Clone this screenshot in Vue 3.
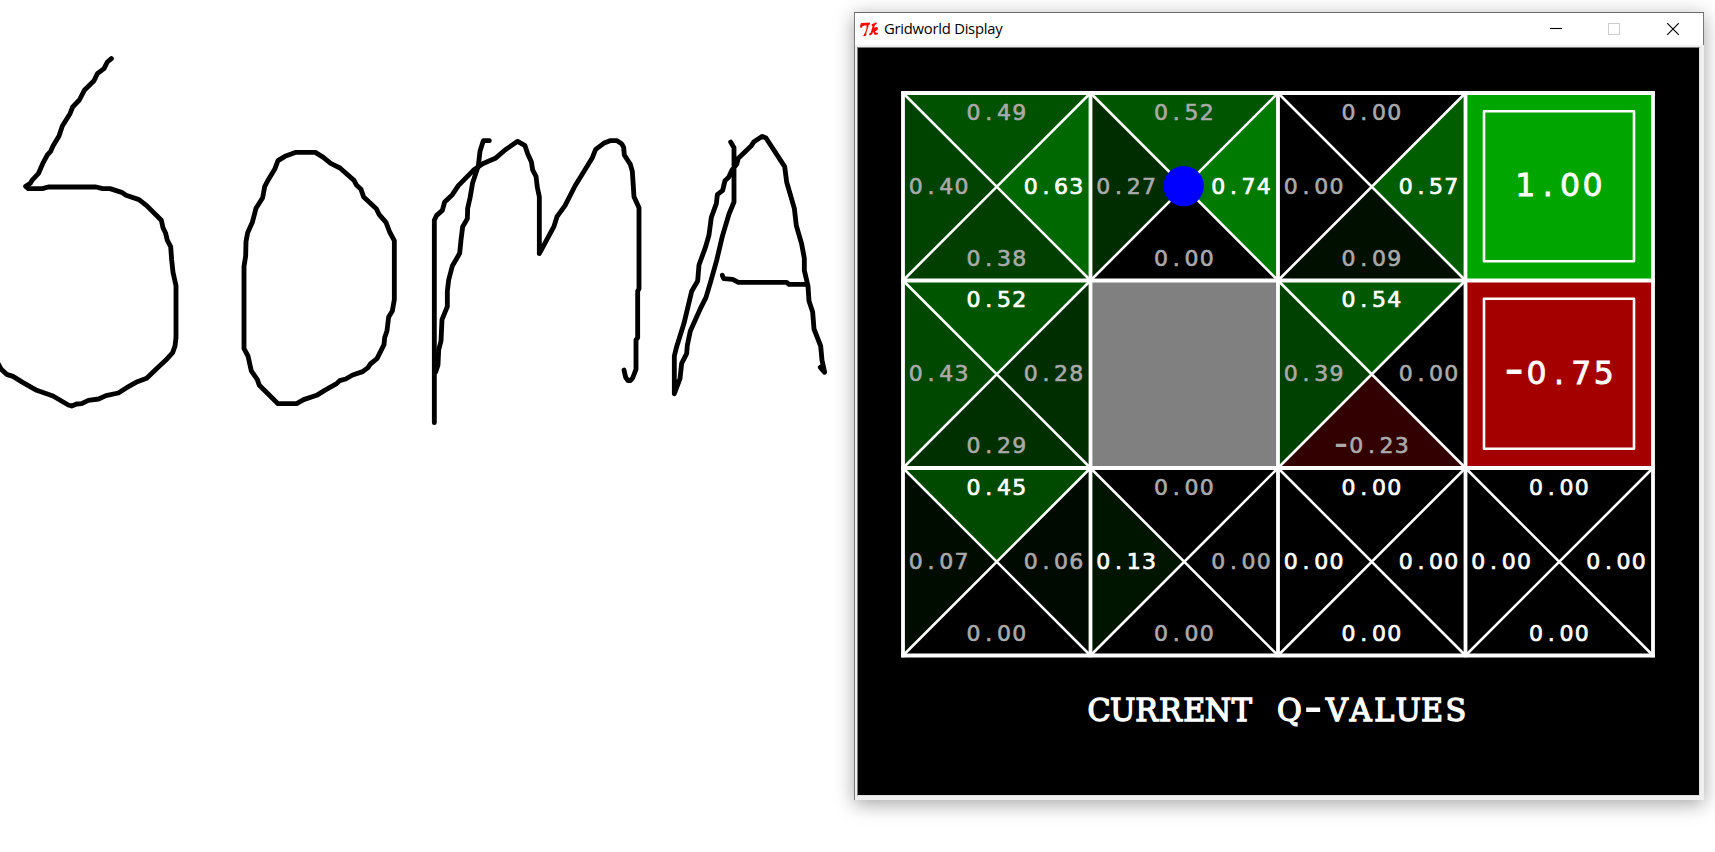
<script setup>
const PITCH = 187.5
const ORIGIN = 45

const rows = [
  [
    { q: ['0.49', '0.63', '0.38', '0.40'], best: [1] },
    { q: ['0.52', '0.74', '0.00', '0.27'], best: [1] },
    { q: ['0.00', '0.57', '0.09', '0.00'], best: [1] },
    { exit: '1.00' }
  ],
  [
    { q: ['0.52', '0.28', '0.29', '0.43'], best: [0] },
    { wall: true },
    { q: ['0.54', '0.00', '-0.23', '0.39'], best: [0] },
    { exit: '-0.75' }
  ],
  [
    { q: ['0.45', '0.06', '0.00', '0.07'], best: [0] },
    { q: ['0.00', '0.00', '0.00', '0.13'], best: [3] },
    { q: ['0.00', '0.00', '0.00', '0.00'], best: [0, 1, 2, 3] },
    { q: ['0.00', '0.00', '0.00', '0.00'], best: [0, 1, 2, 3] }
  ]
]

const cells = rows.flatMap((row, r) =>
  row.map((cell, c) => ({ ...cell, key: `${r}-${c}`, x: ORIGIN + c * PITCH, y: ORIGIN + r * PITCH }))
)

const mid = PITCH / 2
const triangles = [
  `0,0 ${PITCH},0 ${mid},${mid}`,
  `${PITCH},0 ${PITCH},${PITCH} ${mid},${mid}`,
  `0,${PITCH} ${PITCH},${PITCH} ${mid},${mid}`,
  `0,0 0,${PITCH} ${mid},${mid}`
]
const anchors = [
  [93.4, 26.9],
  [150.5, 100.6],
  [93.4, 172.6],
  [35.6, 100.6]
]

function shade(value) {
  const v = parseFloat(value)
  return v < 0 ? `rgb(${Math.round((-v / 0.75) * 165)},0,0)` : `rgb(0,${Math.round(v * 165)},0)`
}

// Fixed-pitch glyph centres around a middle point
function glyphs(text, center, advance) {
  return [...text].map((ch, i) => ({
    ch,
    x: (center + (i - (text.length - 1) / 2) * advance).toFixed(2),
    minus: ch === '-'
  }))
}

const caption = 'CURRENT Q-VALUES'
const captionGlyphs = glyphs(caption, 419.4, 23.78)
const gridLinesX = [0, 1, 2, 3, 4].map((i) => ORIGIN + i * PITCH)
const gridLinesY = [0, 1, 2, 3].map((i) => ORIGIN + i * PITCH)
</script>

<template>
  <main class="desk">
    <svg class="ink" viewBox="0 0 845 852" aria-label="SOMA">
      <g transform="translate(0 40) scale(.33333)">
        <path d="M334 56L322 66L312 86L292 101L282 122L253 151L238 180L218 201L210 221L187 258L177 288L159 318L152 334L142 345L130 367L115 401L96 421L91 430L77 439L85 446H127L145 441H288L308 446H330L365 457L378 466L417 479L440 497L484 541L489 563L497 580L502 601L512 620L515 660L519 697L528 737V893L525 918L518 938L497 961L472 984L440 1015L412 1025L380 1043L355 1059L318 1067L296 1077L265 1081L245 1091L230 1092L215 1098L205 1095L159 1068L110 1051L68 1027L39 1009L20 1003L4 988L-6 970" />
        <path d="M888 337L855 349L834 362L824 388L805 419L794 440L788 473L768 505L757 547L743 578L738 605L737 648L732 680V926L744 948L754 993L772 1019L778 1036L834 1091H890L911 1079L950 1066L974 1051L1010 1031L1019 1022L1037 1017L1058 1005L1088 995L1104 983L1111 972L1131 956L1152 914L1154 893L1161 872L1166 831L1177 813L1183 779V602L1169 576L1158 547L1137 523L1129 506L1091 471L1083 448L1070 436L1062 421L1020 384L992 370L970 352L946 337Z" />
      </g>
      <g transform="translate(410 110) scale(.33333)">
        <path d="M238 92H220L210 124L205 167L188 218L180 264L173 295L172 326L158 350L153 390L149 430L127 468L116 510L112 544V590L96 629L93 693L86 720L84 765L77 786" />
        <path d="M73 938V331L80 316L97 301L104 276L127 254L145 227L190 181L218 161L256 145L285 120L323 94L345 107L353 131L364 155L368 180L378 199L382 232L388 260V431L432 349L441 320L465 287L495 228L547 143L557 118L581 100L600 92H621L635 101L641 112L643 135L661 163L667 184L672 260L687 293V537L683 543V683L678 690V778L668 804L661 812H654L647 802L642 780" />
        <path d="M962 96L972 113V276L957 312L937 379L920 451L902 515L888 562L873 592L841 663L832 706L830 731L815 760L810 806L793 851V738L800 710L822 640L845 544L863 513L867 465L887 410L897 375L904 322L919 281L922 254L938 241L945 212L956 202L966 180L980 163L985 145L1024 107L1032 95L1057 79L1068 84L1124 170L1130 216L1153 295L1159 347L1175 402L1183 445V481L1194 528L1197 573L1208 606L1212 657L1232 708L1236 751L1244 787L1231 772" />
        <path d="M937 496L941 506L968 508L985 517H1130L1137 523H1190" />
      </g>
    </svg>

    <section class="window">
      <header class="titlebar">
        <svg class="tk" viewBox="0 0 19 15">
          <path d="M.6 5.2L1.2 1.5L9.6 1.1L9.2 2.6L4.5 3.1L2.2 3.8L1.4 5.5ZM6.6 2.2Q8.8 2.4 7.8 5.2L5.5 10.8L3.8 14L6.3 12.8" />
          <path d="M16.6 1.8Q15 .8 13.8 3.5L11.4 11.7M11.8 3.3L14.4 2.1M12.2 8.6Q15.8 5 17 6.2Q17.2 8 13.7 8.6L15.3 12L17.8 11.4M9.4 12.8L11.4 11.4" class="k" />
        </svg>
        <h1>Gridworld Display</h1>
        <svg class="controls" viewBox="0 0 130 14">
          <path d="M1 6.5H13" class="min" />
          <rect x="59.5" y="1.5" width="11" height="11" class="max" />
          <path d="M118.2 1.2L129.8 12.8M129.8 1.2L118.2 12.8" class="close" />
        </svg>
      </header>

      <div class="frame">
        <svg class="world" viewBox="0 0 841 747">
          <g v-for="cell in cells" :key="cell.key" :transform="`translate(${cell.x} ${cell.y})`">
            <rect v-if="cell.wall" :width="PITCH" :height="PITCH" fill="#808080" />
            <template v-else-if="cell.exit">
              <rect :width="PITCH" :height="PITCH" :fill="shade(cell.exit)" />
              <rect x="18.5" y="18.2" width="150" height="150" class="inset" />
            </template>
            <template v-else>
              <polygon v-for="(pts, i) in triangles" :key="i" :points="pts" :fill="shade(cell.q[i])" />
              <path :d="`M0 0L${PITCH} ${PITCH}M${PITCH} 0L0 ${PITCH}`" class="diagonal" />
            </template>
          </g>

          <path v-for="x in gridLinesX" :key="'x' + x" :d="`M${x} 43.2V609.3`" class="line" />
          <path v-for="y in gridLinesY" :key="'y' + y" :d="`M43.2 ${y}H796.8`" class="line" />

          <circle cx="325.7" cy="138.1" r="20.2" fill="#00f" />

          <g v-for="cell in cells" :key="'t' + cell.key" :transform="`translate(${cell.x} ${cell.y})`">
            <text v-if="cell.exit" class="big"><tspan v-for="(g, i) in glyphs(cell.exit, 93.4, 22.4)" :key="i" :x="g.x" :y="g.minus ? 106 : 103" :class="{ minus: g.minus }">{{ g.ch }}</tspan></text>
            <template v-if="cell.q">
              <text v-for="(v, i) in cell.q" :key="i" class="value" :class="{ best: cell.best.includes(i) }"><tspan v-for="(g, j) in glyphs(v, anchors[i][0], 15.2)" :key="j" :x="g.x" :y="anchors[i][1] + (g.minus ? 2.4 : 0)" :class="{ minus: g.minus }">{{ g.ch }}</tspan></text>
            </template>
          </g>

          <text class="caption"><tspan v-for="(g, i) in captionGlyphs" :key="i" :x="g.x / 0.96" :y="g.minus ? 677 : 673" :class="{ minus: g.minus }">{{ g.ch }}</tspan></text>
        </svg>
      </div>
    </section>
  </main>
</template>

<style>
body {
  background: #fff;
  overflow: hidden;
}
</style>

<style scoped>
.desk {
  display: flex;
  width: 1715px;
  height: 852px;
  overflow: hidden;
}
.ink {
  flex: none;
  width: 845px;
  height: 852px;
  margin-right: 9px;
}
.ink path {
  fill: none;
  stroke: #000;
  stroke-width: 14.5;
  stroke-linecap: round;
  stroke-linejoin: round;
}
.window {
  flex: none;
  display: flex;
  flex-direction: column;
  box-sizing: border-box;
  width: 850px;
  height: 788px;
  margin-top: 12px;
  border-top: 1px solid #6a6a6a;
  border-left: 1px solid #777;
  background: #f0f0f0;
  box-shadow: 0 4px 18px rgba(0, 0, 0, 0.36);
}
.titlebar {
  flex: none;
  display: flex;
  align-items: center;
  box-sizing: border-box;
  height: 32px;
  padding-left: 5px;
  border-right: 1px solid #777;
  background: #fff;
}
.tk {
  width: 19px;
  height: 15px;
  margin-right: 5px;
}
.tk path {
  fill: #f00;
  stroke: #f00;
  stroke-width: 1;
}
.tk .k {
  fill: none;
  stroke-width: 1.9;
}
h1 {
  margin: 0 0 2px;
  font: 400 14.8px/20px "Open Sans", "Noto Sans", sans-serif;
  letter-spacing: -0.25px;
  color: #000;
}
.controls {
  width: 130px;
  height: 14px;
  margin-left: auto;
  margin-right: 24px;
}
.controls path {
  fill: none;
  stroke: #000;
  stroke-width: 1.1;
}
.controls .max {
  fill: none;
  stroke: #ccc;
}
.frame {
  flex: none;
  width: 841px;
  height: 747px;
  margin: 2px 0 0 2px;
  border: 1px solid #777;
  border-right-color: #e0e0e0;
  border-bottom-color: #e0e0e0;
  background: #000;
}
.world {
  display: block;
  width: 841px;
  height: 747px;
}
.line {
  fill: none;
  stroke: #fff;
  stroke-width: 3.8;
}
.diagonal {
  stroke: #fff;
  stroke-width: 2.6;
}
.inset {
  fill: none;
  stroke: #fff;
  stroke-width: 2.6;
  stroke-linejoin: round;
}
text {
  font-family: "DejaVu Sans", sans-serif;
  text-anchor: middle;
  fill: #fff;
}
.value {
  font-size: 22px;
  fill: #aaa;
  stroke: #aaa;
  stroke-width: 0.6;
}
.best {
  fill: #fff;
  stroke: #fff;
  stroke-width: 0.7;
}
.value .minus {
  font-size: 39px;
  stroke-width: 0;
}
.big {
  font-size: 31.5px;
  stroke: #fff;
  stroke-width: 0.8;
}
.big .minus {
  font-size: 56px;
  stroke-width: 0;
}
.caption {
  font-family: "DejaVu Serif", serif;
  font-size: 31.5px;
  stroke: #fff;
  stroke-width: 1.4;
  transform: scaleX(0.96);
}
.caption .minus {
  font-size: 58px;
  stroke-width: 0;
}
</style>
